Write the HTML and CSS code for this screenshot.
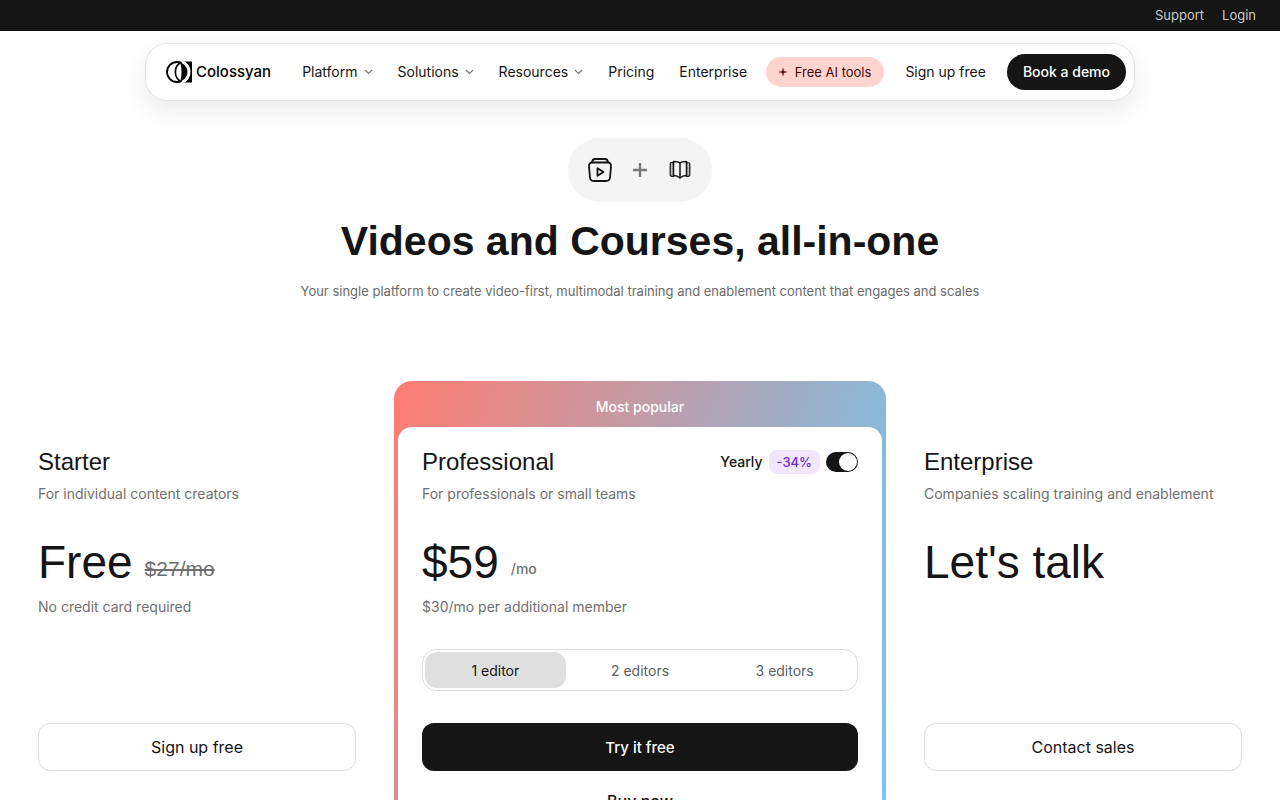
FILE: index.html
```html
<!DOCTYPE html>
<html lang="en">
<head>
  <meta charset="UTF-8" />
  <meta name="viewport" content="width=device-width, initial-scale=1.0" />

  <title>Pricing – Colossyan</title>
  <link rel="stylesheet" href="styles.css">
</head>

<body>
  <div class="topbar">
    <a href="#">Support</a>
    <a href="#">Login</a>
  </div>

  <!-- NAVBAR -->
  <header class="navbar">
    <a class="logo" href="#">
      <svg width="26" height="22" viewBox="0 0 26 22" aria-hidden="true">
        <path d="M17 .5h9v21h-9z" fill="#000" />
        <ellipse cx="13" cy="11" rx="11.500" ry="11.500" fill="#fff" />
        <circle cx="11" cy="11" r="10" fill="#fff" stroke="#000" stroke-width="1.800" />
        <path d="M16 1.200a11 11 0 0 1 0 19.600" fill="none" stroke="#fff" stroke-width="4" />
        <path d="M15 1.500C7.500 5 7.500 17 15 20.500" fill="none" stroke="#000" stroke-width="1.600" />
        <path d="M14 1.500c10 3 10 16 0 19 2-5 2-14 0-19z" fill="#000" />
      </svg>
      <span>Colossyan</span>
    </a>
    <nav class="menu">
      <a href="#">Platform
        <svg class="chevron" viewBox="0 0 9 6"><path d="M1 1 4.500 4.500 8 1" /></svg>
      </a>
      <a href="#">Solutions
        <svg class="chevron" viewBox="0 0 9 6"><path d="M1 1 4.500 4.500 8 1" /></svg>
      </a>
      <a href="#">Resources
        <svg class="chevron" viewBox="0 0 9 6"><path d="M1 1 4.500 4.500 8 1" /></svg>
      </a>
      <a href="#">Pricing</a>
      <a href="#">Enterprise</a>
    </nav>
    <div class="nav-actions">
      <a class="tools" href="#">
        <svg width="8" height="8" viewBox="0 0 8 8"><path d="M4 0 4.800 3.200 8 4 4.800 4.800 4 8 3.200 4.800 0 4 3.200 3.200z" fill="#4a0808" stroke="#4a0808" stroke-width=".3" /></svg>
        Free AI tools
      </a>
      <a class="signup" href="#">Sign up free</a>
      <a class="demo" href="#">Book a demo</a>
    </div>
  </header>

  <main>
    <!-- HERO -->
    <section class="hero">
      <div class="hero-icons">
        <svg width="24" height="24" viewBox="0 0 24 24" fill="none" stroke="#151515" stroke-width="1.800" stroke-linejoin="round">
          <path d="M4 4.500C4.200 1.800 5 1 7 1h10c2 0 2.800.8 3 3.500" />
          <path d="M4.500 4.500h15c2.700 0 3.700 1.300 3.500 4l-1 11c-.2 2.500-1.500 3.500-4 3.500H6c-2.500 0-3.800-1-4-3.500L1 8.500c-.2-2.700.8-4 3.500-4z" />
          <path d="M9.500 10.200v7.600l6-3.800z" />
        </svg>
        <svg width="14" height="14" viewBox="0 0 14 14" stroke="#777" stroke-width="2.400">
          <path d="M7 0v14M0 7h14" />
        </svg>
        <svg width="24" height="20" viewBox="-1 0 24 20" fill="none" stroke="#151515" stroke-width="1.500" stroke-linejoin="round">
          <path d="M4.500 2.500C2 2.500 1.200 2.500 1.200 4v11c0 1 .8 1.500 3.300 1.500zM17.500 2.500c2.500 0 3.300 0 3.300 1.500v11c0 1-.8 1.500-3.300 1.500z" fill="#bbb" stroke-width="1.200" />
          <path d="M4.500 1.500C7 1.500 9.500 1.500 11 3c1.500-1.500 4-1.500 6.500-1.500v14c-2.500 0-5 1-6.500 2.500-1.500-1.500-4-2.500-6.500-2.500z" fill="#f4f4f4" />
          <path d="M11 3v15" />
        </svg>
      </div>
      <h1>Videos and Courses, all-in-one</h1>
      <p>Your single platform to create video-first, multimodal training and enablement content that engages and scales</p>
    </section>

    <!-- PLANS -->
    <section class="plans">
      <article class="plan">
        <h2>Starter</h2>
        <p class="desc">For individual content creators</p>
        <div class="price">Free <s>$27/mo</s></div>
        <p class="note">No credit card required</p>
        <button class="btn btn-outline" type="button">Sign up free</button>
      </article>

      <article class="popular">
        <div class="popular-label">Most popular</div>
        <div class="plan">
          <div class="plan-head">
            <h2>Professional</h2>
            <label class="billing">
              Yearly
              <span class="discount">-34%</span>
              <input class="switch" type="checkbox" checked />
            </label>
          </div>
          <p class="desc">For professionals or small teams</p>
          <div class="price">$59 <small>/mo</small></div>
          <p class="note">$30/mo per additional member</p>
          <div class="editors">
            <button class="active" type="button">1 editor</button>
            <button type="button">2 editors</button>
            <button type="button">3 editors</button>
          </div>
          <button class="btn btn-dark" type="button">Try it free</button>
          <button class="btn btn-plain" type="button">Buy now</button>
        </div>
      </article>

      <article class="plan">
        <h2>Enterprise</h2>
        <p class="desc">Companies scaling training and enablement</p>
        <div class="price">Let's talk</div>
        <button class="btn btn-outline" type="button">Contact sales</button>
      </article>
    </section>
  </main>
</body>
</html>
```

FILE: styles.css
```css
* { box-sizing: border-box; }
body { margin: 0; font-family: Inter, "Liberation Sans", sans-serif; font-size: 14px; line-height: 20px; color: #151515; background: #fff; }
h1, h2, p { margin: 0; }
a { color: inherit; text-decoration: none; }
button { font-family: inherit; color: inherit; cursor: pointer; }

.topbar { display: flex; justify-content: flex-end; gap: 18px; height: 31px; padding: 5px 24px; background: #151515; color: #c8c8c8; font-size: 13px; }

/* navbar */
.navbar { display: flex; align-items: center; max-width: 990px; height: 58px; margin: 12px auto 0; padding: 0 8px 0 20px; border: 1px solid #e4e4e4; border-radius: 22px; background: #fff; box-shadow: 0 10px 24px rgba(0, 0, 0, 0.08); white-space: nowrap; }
.logo { display: flex; align-items: center; gap: 4px; font-size: 15px; font-weight: 500; color: #000; }
.menu { display: flex; gap: 25px; margin-left: 31px; }
.menu a { display: flex; align-items: center; gap: 6px; }
.chevron { width: 9px; height: 6px; fill: none; stroke: #777; stroke-width: 1.2; }
.nav-actions { display: flex; align-items: center; gap: 21px; margin-left: auto; }
.tools { display: flex; align-items: center; gap: 8px; height: 30px; padding: 0 13px; border-radius: 15px; background: #ffd4ce; color: #4a0808; font-size: 13px; }
.demo { padding: 8px 16px; border-radius: 18px; background: #151515; color: #fff; font-weight: 500; }

/* hero */
.hero { display: flex; flex-direction: column; align-items: center; padding: 37px 24px 0; text-align: center; }
.hero-icons { display: flex; align-items: center; justify-content: space-between; width: 144px; height: 64px; padding: 0 20px; border-radius: 32px; background: #f4f4f4; }
h1 { margin-top: 15px; font-family: "Liberation Sans", Arial, sans-serif; font-size: 41px; line-height: 48px; font-weight: 700; }
.hero p { margin-top: 16px; font-size: 13px; color: #6b6b6b; }

/* plans */
.plans { display: grid; grid-template-columns: 318fr 492fr 318fr; gap: 38px; padding: 0 38px; margin-top: 80px; }
.plan { display: flex; flex-direction: column; }
.plans > .plan { height: 390px; padding-top: 66px; }
h2 { font-size: 24px; line-height: 30px; font-weight: 400; font-family: "Liberation Sans", Arial, sans-serif; }
.desc { margin-top: 7px; color: #6f6f6f; }
.price { display: flex; align-items: flex-end; gap: 12px; margin-top: 30px; font-family: "Liberation Sans", Arial, sans-serif; font-size: 46px; line-height: 56px; }
.price s, .price small { line-height: 42px; color: #6f6f6f; }
.price s { font-size: 21px; }
.price small { font-family: Inter, sans-serif; font-size: 14px; font-weight: 500; }
.note { margin-top: 7px; color: #6f6f6f; }

.btn { height: 48px; border: 0; border-radius: 12px; font-size: 16px; flex-shrink: 0; }
.btn-outline { margin-top: auto; border: 1px solid #dedede; background: #fff; }
.btn-dark { margin-top: 32px; background: #151515; color: #fff; font-size: 15px; font-weight: 500; }
.btn-plain { margin-top: 6px; background: none; font-weight: 500; }

.popular { padding: 0 4px 4px; border-radius: 18px; background: linear-gradient(110deg, #ff7c72, #8ab9d8 75%, #78c8f5); }
.popular-label { padding: 16px 0 10px; color: #fff; font-weight: 500; text-align: center; }
.popular .plan { padding: 20px 24px 24px; border-radius: 14px; background: #fff; }
.plan-head { display: flex; align-items: center; justify-content: space-between; }
.billing { display: flex; align-items: center; gap: 6px; font-weight: 500; }
.discount { padding: 2px 8px; border-radius: 8px; background: #f0e7ff; color: #6d28d9; font-size: 13px; }
.switch { appearance: none; display: flex; width: 32px; height: 20px; margin: 0; padding: 1px; border-radius: 10px; background: #151515; cursor: pointer; }
.switch::before { content: ""; width: 18px; height: 18px; border-radius: 9px; background: #fff; }
.switch:checked { justify-content: flex-end; }

.editors { display: grid; grid-template-columns: 1fr 1fr 1fr; gap: 4px; height: 42px; margin-top: 32px; padding: 2px; border: 1px solid #dedede; border-radius: 14px; }
.editors button { border: 0; border-radius: 12px; background: none; color: #5f5f5f; font-size: 14px; }
.editors .active { background: #dfdfdf; color: #151515; }
```
